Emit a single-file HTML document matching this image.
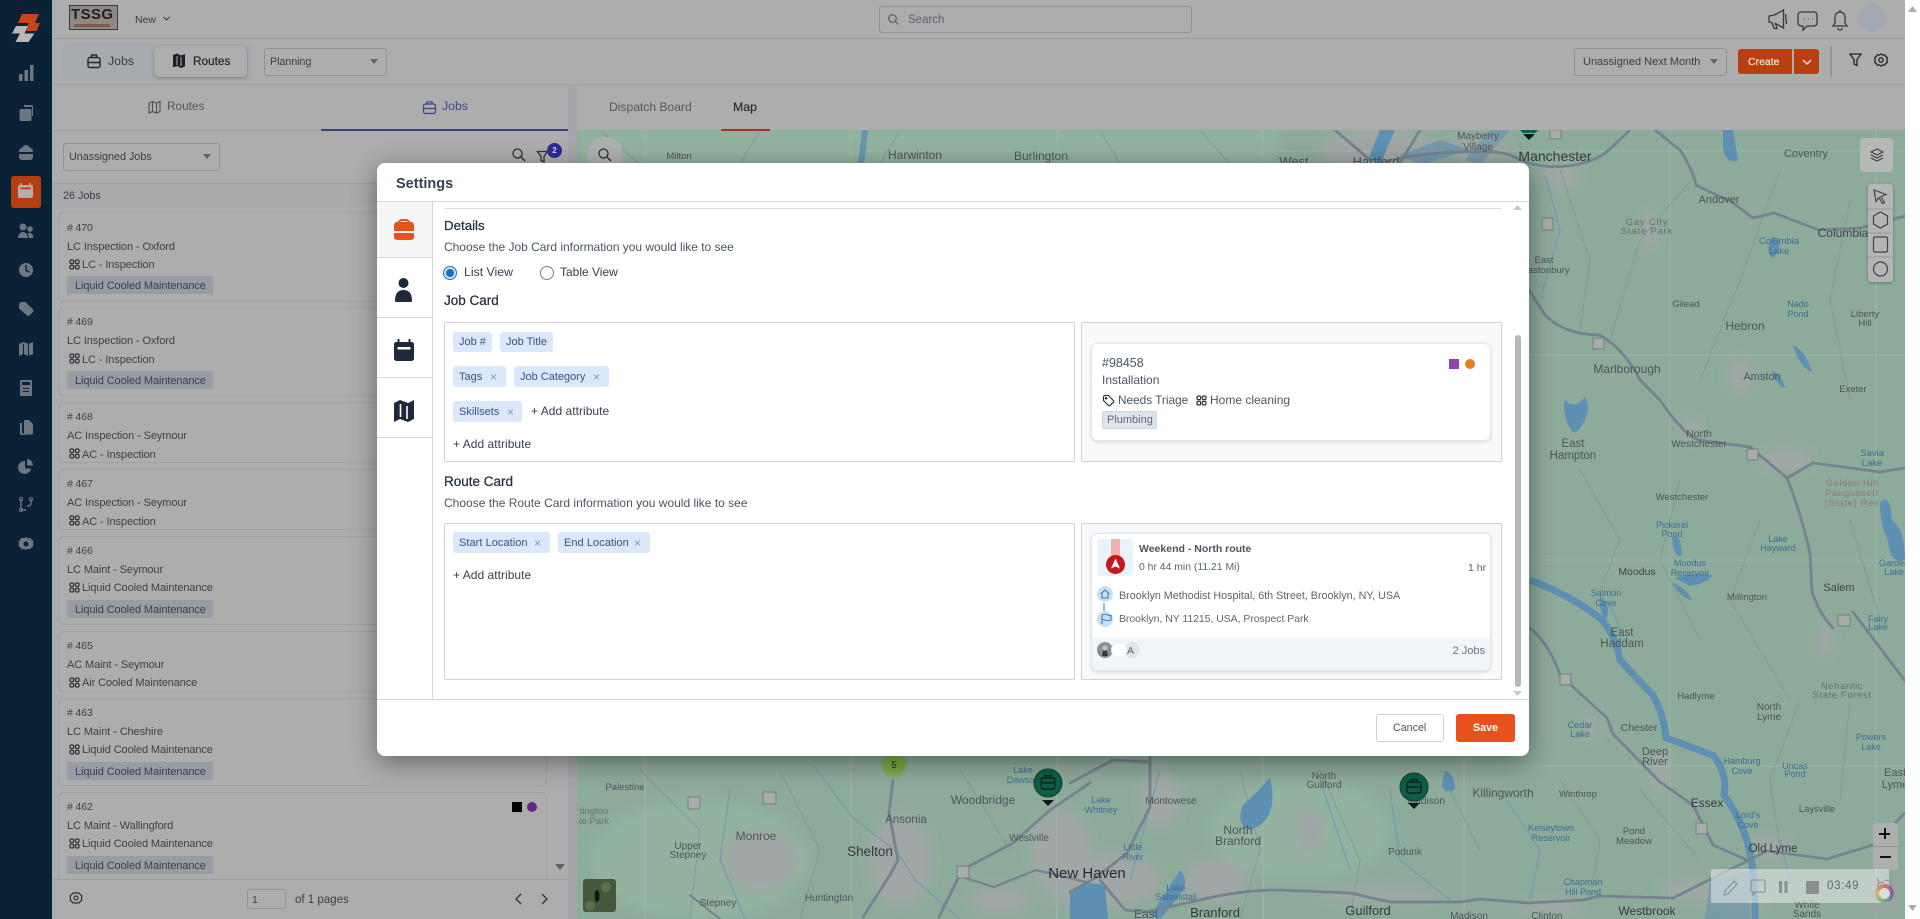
<!DOCTYPE html>
<html lang="en"><head><meta charset="utf-8"><title>Settings</title>
<style>
html,body{margin:0;padding:0;width:1920px;height:919px;overflow:hidden;background:#adadad;font-family:"Liberation Sans",Arial,sans-serif}
div,span,svg{position:absolute;box-sizing:border-box}
.t{white-space:nowrap;line-height:16px;height:16px;font-size:12px;color:#3a3f45}
.card{left:58px;width:489px;background:#adadad;border:1px solid #9fa1a4;border-radius:6px;overflow:hidden}
.c{left:67px;font-size:11px;letter-spacing:-.1px;color:#3d4146;margin-top:1px}
.chipg{left:67px;width:146px;height:18px;background:#979ca5;border-radius:2px}
.chip{background:#dbe8fb;border-radius:3px}
.b{color:#3b4f86;font-size:11px}
.h{font-size:13.5px;color:#27303c;-webkit-text-stroke:.25px #27303c}
.x{color:#8a97b5;font-size:12px}
.box{border:1px solid #cfd3d8;border-radius:2px}
.sel{border:1px solid #8f9296;border-radius:3px}
.tri{width:0;height:0;border-left:4px solid transparent;border-right:4px solid transparent;border-top:5px solid #5f6368}
</style></head><body>
<svg width="0" height="0" style="left:0;top:0"><defs>
<symbol id="g" viewBox="0 0 11 11"><g fill="none" stroke="#33383e" stroke-width="1.300"><rect x="1" y="1" width="3.600" height="3.600" rx="1.200"/><rect x="6.400" y="1" width="3.600" height="3.600" rx="1.200"/><rect x="1" y="6.400" width="3.600" height="3.600" rx="1.200"/><rect x="6.400" y="6.400" width="3.600" height="3.600" rx="1.200"/></g></symbol>
<filter id="bl" x="-30%" y="-30%" width="160%" height="160%"><feGaussianBlur stdDeviation="5"/></filter>
</defs></svg>

<!-- map -->
<svg style="left:577px;top:130px;filter:blur(.35px)" width="1328" height="789" viewBox="577 130 1328 789" font-family="Liberation Sans, sans-serif">
<rect x="577" y="130" width="1328" height="789" fill="#8dab9b"/>
<g filter="url(#bl)">
<g fill="#93b3a0"><rect x="577" y="130" width="700" height="34"/><ellipse cx="700" cy="860" rx="110" ry="60"/><ellipse cx="1300" cy="830" rx="90" ry="50"/></g>
<g fill="#a1a7a6">
<ellipse cx="1380" cy="150" rx="60" ry="20"/><ellipse cx="1480" cy="150" rx="30" ry="12"/><ellipse cx="1560" cy="175" rx="20" ry="12"/>
<ellipse cx="1650" cy="230" rx="8" ry="20"/><ellipse cx="1785" cy="460" rx="26" ry="12"/><ellipse cx="1740" cy="375" rx="12" ry="18"/><ellipse cx="1690" cy="430" rx="9" ry="12"/>
<ellipse cx="1825" cy="640" rx="8" ry="16"/><ellipse cx="1770" cy="848" rx="22" ry="10"/><ellipse cx="1700" cy="890" rx="40" ry="10"/><ellipse cx="1550" cy="908" rx="30" ry="8"/>
<ellipse cx="1660" cy="770" rx="10" ry="22"/><ellipse cx="1590" cy="728" rx="8" ry="10"/>
<ellipse cx="1100" cy="880" rx="60" ry="28"/><ellipse cx="1060" cy="850" rx="30" ry="40"/><ellipse cx="900" cy="860" rx="32" ry="45"/><ellipse cx="760" cy="860" rx="38" ry="30"/><ellipse cx="1215" cy="880" rx="32" ry="22"/><ellipse cx="1160" cy="800" rx="20" ry="28"/><ellipse cx="1000" cy="900" rx="30" ry="14"/>
<ellipse cx="1380" cy="895" rx="60" ry="8"/><ellipse cx="1310" cy="830" rx="14" ry="22"/><ellipse cx="1740" cy="905" rx="24" ry="10"/>
</g></g>
<g stroke="#a8baaf" stroke-width="1" opacity=".7"><path d="M645 130V919M851 130V919M1057 130V919M1263 130V919M1464 130V919M1670 130V919M1876 130V919M577 151H1905M577 355H1905M577 560H1905M577 766H1905"/></g>
<g fill="none" stroke="#7f9b8e" stroke-width=".9">
<path d="M1560 170L1590 260L1580 330M1700 170L1640 240L1610 340M1780 170L1740 280L1700 380M1850 200L1830 300L1850 400M1580 470L1620 540L1600 590M1680 480L1660 560L1700 640M1760 520L1730 600L1790 700M1850 520L1880 620M1560 780L1600 840L1590 900M1640 790L1700 860M1800 700L1770 780L1780 850M1850 700L1840 800M1240 770L1260 850L1240 919M1320 770L1360 860L1350 919M1440 770L1480 850M640 770L700 830L690 919M780 770L820 850L800 919M960 770L1010 850M600 130L640 164M760 130L740 164M900 130L880 164M1100 130L1120 164M1200 130L1230 164"/>
</g>
<g fill="none" stroke="#6f9ab2" stroke-width="1.100">
<path d="M1545 175L1560 230L1540 300M1500 790L1540 850L1530 900M1390 790L1400 860L1450 900M1320 780L1350 870M1160 770L1130 880M815 767L852 817L898 853L915 880L960 919M730 790L720 860L745 919M1608 600L1625 640M1790 880L1780 840"/>
</g>
<path d="M1530 580Q1570 595 1600 618Q1616 635 1620 660Q1640 682 1653 695Q1664 715 1666 738Q1695 748 1714 756Q1728 775 1724 795Q1738 815 1745 835Q1755 860 1755 919" fill="none" stroke="#5d90b2" stroke-width="7" stroke-linejoin="round"/>
<g fill="#5d90b2">
<path d="M1565 400Q1575 410 1585 397Q1592 410 1582 425Q1575 438 1570 428Q1562 415 1565 400Z"/>
<path d="M1793 345Q1805 350 1812 372Q1800 368 1793 345ZM1772 370Q1782 375 1785 388Q1775 385 1772 370Z"/>
<path d="M1672 537Q1680 530 1682 555Q1674 560 1672 537ZM1675 578Q1690 572 1712 575Q1710 582 1690 586ZM1672 582Q1688 590 1692 600Q1680 598 1672 582Z"/>
<path d="M1880 503Q1890 492 1892 520Q1905 530 1905 560Q1890 565 1888 540Q1880 525 1880 503Z"/>
<path d="M1769 245Q1770 235 1778 238Q1782 250 1773 258Q1767 255 1769 245ZM1723 130L1733 130L1738 160Q1726 165 1723 148Z"/>
<path d="M1270 777Q1280 820 1250 830Q1235 825 1243 805Q1260 790 1270 777Z"/><path d="M1070 892Q1090 880 1105 885L1108 919L1070 919Z"/><path d="M1180 870Q1190 880 1180 895L1160 919L1150 915Q1165 895 1180 870Z"/><path d="M1445 770Q1455 775 1455 790Q1445 795 1442 785Z"/>
<path d="M1600 596Q1612 605 1606 620Q1598 610 1600 596Z"/><path d="M1710 880L1750 870L1750 919L1705 919Z" opacity=".5"/>
<path d="M1490 130L1510 130L1480 165L1465 160Z" opacity=".5"/><path d="M1380 130L1395 130L1380 165L1368 160Z"/><path d="M1400 155L1440 140L1470 150L1420 165Z" opacity=".6"/>
<path d="M862 130H868L864 165H858Z" opacity=".8"/>
</g>
<g fill="none" stroke="#75848f" stroke-width="2.800" stroke-linejoin="round" stroke-linecap="round">
<path d="M1380 163Q1430 150 1480 152Q1505 150 1520 160Q1545 170 1575 165Q1600 160 1612 147L1630 130"/>
<path d="M1335 130L1370 160M1420 130L1400 163"/>
<path d="M1655 130L1680 150Q1693 170 1696 185Q1715 195 1729 200L1753 218L1774 213L1819 230L1860 228L1905 216"/>
<path d="M1529 290L1545 315Q1565 335 1600 335Q1625 350 1640 380L1660 400Q1675 422 1680 425Q1690 440 1705 441L1750 447L1787 478L1813 463L1880 472L1905 468"/>
<path d="M1787 478Q1800 510 1810 553L1812 592Q1820 615 1833 628"/>
<path d="M1853 612L1905 681"/>
<path d="M1530 628Q1550 645 1560 675L1607 718L1613 734L1660 782L1693 805L1713 845L1747 860"/>
<path d="M1146 912L1200 900Q1240 890 1280 890L1350 893L1390 902L1460 902L1480 899L1529 903L1583 900L1600 896L1673 898L1733 868L1767 851L1827 859L1873 845L1905 813"/>
<path d="M863 917L890 875L898 860L889 813L893 780"/>
<path d="M939 917L962 870L1013 843L1050 810L1090 783"/>
<path d="M962 877L994 887L1036 870L1090 883" stroke-width="2.200"/>
<path d="M1150 757L1150 807L1127 853L1097 877L1070 892" />
<path d="M1070 783L1113 760L1150 762"/>
<path d="M1100 880L1125 910L1146 912"/>
<path d="M720 919L690 895" stroke-width="2.200"/>
</g>
<g font-size="11" fill="#4d5658" text-anchor="middle">
<text x="679" y="159" font-size="9.500">Milton</text><text x="915" y="159" font-size="12">Harwinton</text><text x="1041" y="160" font-size="12">Burlington</text>
<text x="1294" y="166" font-size="13">West</text><text x="1376" y="166" font-size="13">Hartford</text>
<text x="1478" y="139" font-size="10">Mayberry</text><text x="1478" y="150" font-size="10">Village</text>
<text x="1555" y="161" font-size="14" fill="#333a3d">Manchester</text>
<text x="1806" y="157" font-size="11">Coventry</text><text x="1719" y="203" font-size="11">Andover</text>
<text x="1647" y="225" font-size="9.500" fill="#5f776b" letter-spacing=".8">Gay City</text><text x="1647" y="234" font-size="9.500" fill="#5f776b" letter-spacing=".8">State Park</text>
<text x="1843" y="237" font-size="12" fill="#3e4649">Columbia</text>
<text x="1779" y="244" font-size="9.500" fill="#3e6f92">Columbia</text><text x="1779" y="254" font-size="9.500" fill="#3e6f92">Lake</text>
<text x="1544" y="263" font-size="9.500">East</text><text x="1544" y="273" font-size="9.500">Glastonbury</text>
<text x="1745" y="330" font-size="12">Hebron</text><text x="1865" y="317" font-size="9.500">Liberty</text><text x="1865" y="326" font-size="9.500">Hill</text>
<text x="1798" y="307" font-size="9" fill="#3e6f92">Nado</text><text x="1798" y="317" font-size="9" fill="#3e6f92">Pond</text><text x="1686" y="307" font-size="9.500">Gilead</text>
<text x="1627" y="373" font-size="12">Marlborough</text><text x="1762" y="380" font-size="11">Amston</text><text x="1853" y="392" font-size="9.500">Exeter</text>
<text x="1573" y="447" font-size="11.500">East</text><text x="1573" y="459" font-size="11.500">Hampton</text>
<text x="1699" y="437" font-size="10.500">North</text><text x="1699" y="447" font-size="10">Westchester</text>
<text x="1872" y="456" font-size="9.500" fill="#3e6f92">Savia</text><text x="1872" y="466" font-size="9.500" fill="#3e6f92">Lake</text>
<g fill="#8a7d72" font-size="9.500" letter-spacing=".6"><text x="1852" y="486">Golden Hill</text><text x="1852" y="496">Paugussett</text><text x="1852" y="506">(State) Res</text></g>
<text x="1682" y="500" font-size="9.500">Westchester</text>
<g fill="#3e6f92" font-size="9"><text x="1672" y="528">Pickerel</text><text x="1672" y="537">Pond</text><text x="1778" y="542">Lake</text><text x="1778" y="551">Hayward</text><text x="1690" y="566">Moodus</text><text x="1690" y="576">Reservoir</text><text x="1606" y="596">Salmon</text><text x="1606" y="606">Cove</text><text x="1878" y="622">Fairy</text><text x="1878" y="630">Lake</text><text x="1580" y="728">Cedar</text><text x="1580" y="737">Lake</text><text x="1871" y="740">Powers</text><text x="1871" y="750">Lake</text><text x="1742" y="764">Hamburg</text><text x="1742" y="774">Cove</text><text x="1795" y="769">Uncas</text><text x="1795" y="777">Pond</text><text x="1748" y="818">Lord's</text><text x="1748" y="828">Cove</text><text x="1551" y="831">Kelseytown</text><text x="1551" y="841">Reservoir</text><text x="1583" y="885">Chapman</text><text x="1583" y="895">Hill Pond</text><text x="1023" y="773">Lake</text><text x="1023" y="783">Dawson</text><text x="1101" y="803">Lake</text><text x="1101" y="813">Whitney</text><text x="1133" y="850">Little</text><text x="1133" y="860">River</text><text x="1176" y="891">Lake</text><text x="1176" y="900">Saltonstall</text><text x="1894" y="566">Garden</text><text x="1894" y="575">Lake</text></g>
<text x="1637" y="575" font-size="10.500" fill="#3e4649">Moodus</text><text x="1747" y="600" font-size="9.500">Millington</text><text x="1839" y="591" font-size="11" fill="#3e4649">Salem</text>
<text x="1622" y="636" font-size="11.500">East</text><text x="1622" y="647" font-size="11.500">Haddam</text>
<g fill="#5f776b" font-size="9.500" letter-spacing=".6"><text x="1842" y="689">Nehantic</text><text x="1842" y="698">State Forest</text></g>
<text x="1696" y="699" font-size="9.500">Hadlyme</text><text x="1769" y="710" font-size="10">North</text><text x="1769" y="720" font-size="10">Lyme</text>
<text x="1639" y="731" font-size="10.500">Chester</text><text x="1655" y="755" font-size="11">Deep</text><text x="1655" y="765" font-size="11">River</text>
<text x="1895" y="776" font-size="11">East</text><text x="1895" y="788" font-size="11">Lyme</text>
<text x="1578" y="797" font-size="9.500">Winthrop</text><text x="1503" y="797" font-size="12">Killingworth</text><text x="1707" y="807" font-size="12" fill="#333a3d">Essex</text><text x="1817" y="812" font-size="9.500">Laysville</text>
<text x="1634" y="834" font-size="9.500">Pond</text><text x="1634" y="844" font-size="9.500">Meadow</text><text x="1773" y="852" font-size="11.500" fill="#333a3d">Old Lyme</text>
<text x="1647" y="915" font-size="12" fill="#333a3d">Westbrook</text><text x="1807" y="908" font-size="10">White</text><text x="1807" y="917" font-size="10">Sands</text><text x="1547" y="919" font-size="10">Clinton</text>
<text x="1324" y="779" font-size="10">North</text><text x="1324" y="788" font-size="10">Guilford</text><text x="1405" y="855" font-size="10">Podunk</text><text x="1426" y="804" font-size="10">Madison</text>
<text x="1238" y="834" font-size="12">North</text><text x="1238" y="845" font-size="12">Branford</text><text x="1171" y="804" font-size="10">Montowese</text>
<text x="1087" y="878" font-size="15" fill="#262c30">New Haven</text><text x="1215" y="917" font-size="13" fill="#333a3d">Branford</text><text x="1146" y="918" font-size="12">East</text><text x="1368" y="915" font-size="13" fill="#333a3d">Guilford</text><text x="1469" y="919" font-size="10">Madison</text>
<text x="625" y="790" font-size="9.500">Palestine</text><text x="594" y="814" font-size="9.500" fill="#5f776b">tington</text><text x="594" y="824" font-size="9.500" fill="#5f776b">te Park</text>
<text x="688" y="849" font-size="10">Upper</text><text x="688" y="858" font-size="10">Stepney</text><text x="756" y="840" font-size="12">Monroe</text><text x="718" y="906" font-size="10">Stepney</text><text x="829" y="901" font-size="10">Huntington</text>
<text x="870" y="856" font-size="13.500" fill="#333a3d">Shelton</text><text x="906" y="823" font-size="11.500">Ansonia</text><text x="983" y="804" font-size="12">Woodbridge</text><text x="1029" y="841" font-size="10">Westville</text>
</g>
<g fill="#a6adab" stroke="#6f7573" stroke-width=".8"><rect x="1593" y="338" width="11" height="11"/><rect x="1747" y="449" width="11" height="11"/><rect x="1838" y="615" width="12" height="11"/><rect x="1560" y="674" width="11" height="11"/><rect x="1696" y="823" width="11" height="11"/><rect x="1542" y="218" width="11" height="12"/><rect x="1550" y="130" width="11" height="9"/><rect x="763" y="792" width="13" height="12"/><rect x="688" y="797" width="12" height="12"/><rect x="957" y="866" width="12" height="12"/></g>
<!-- markers -->
<circle cx="894" cy="764" r="14" fill="#83a85c" opacity=".55"/><circle cx="894" cy="764" r="11" fill="#7cab45"/><text x="894" y="768" font-size="9.500" text-anchor="middle" fill="#1b2a12">5</text>
<g><circle cx="1048" cy="783" r="14" fill="#0c5f49" stroke="#1a3a32" stroke-width="1"/><path d="M1042 800h12l-6 6z" fill="#0e1a16"/><rect x="1041" y="778" width="14" height="11" rx="2" fill="none" stroke="#10231d" stroke-width="1.400"/><path d="M1045 778v-2.500h6v2.500M1041 783h14" stroke="#10231d" fill="none" stroke-width="1.400"/></g>
<g><circle cx="1414" cy="787" r="14" fill="#0c5f49" stroke="#1a3a32" stroke-width="1"/><path d="M1408 803h12l-6 6z" fill="#0e1a16"/><rect x="1407" y="782" width="14" height="11" rx="2" fill="none" stroke="#10231d" stroke-width="1.400"/><path d="M1411 782v-2.500h6v2.500M1407 787h14" stroke="#10231d" fill="none" stroke-width="1.400"/></g>
<path d="M1520 130h18l-3 3h-12z" fill="#0c5f49"/><path d="M1523 134h12l-6 6z" fill="#0e1a16"/>
<rect x="583" y="879" width="33" height="33" rx="3" fill="#46583c"/><ellipse cx="597" cy="896" rx="2.500" ry="6" fill="#12160f"/><circle cx="606" cy="887" r="5" fill="#5d7048"/><circle cx="590" cy="906" r="5" fill="#5d7048"/>
</svg>

<!-- right strip -->
<div style="left:1905px;top:0;width:15px;height:919px;background:#fff"></div>
<svg style="left:1905px;top:0" width="15" height="919"><path d="M3 12l4.500-6 4.500 6z" fill="#adadad"/><path d="M3 905l4.500 6 4.500-6z" fill="#adadad"/></svg>

<!-- sidebar -->
<div style="left:0;top:0;width:52px;height:919px;background:#0a2235"></div>
<svg style="left:0;top:0" width="52" height="570">
<g fill="#c8441a"><path d="M22 14h17l-4 9H18zM28.500 23H40l-3.500 8h-10z"/></g><g fill="#b9b9b9"><path d="M16 26h12l-3.500 7.500H12zM20 33.500h14.500L28.500 42h-13z"/></g>
<rect x="11" y="176" width="30" height="32" rx="3" fill="#b53f13"/>
<g fill="#6d7780">
<path d="M19 74h3.500v7H19zM24.500 70h3.500v11h-3.500zM30 65h3.500v16H30z"/>
<path d="M21 109h9a1.500 1.500 0 0 1 1.500 1.500v9a1.500 1.500 0 0 1-1.500 1.500h-9a1.500 1.500 0 0 1-1.500-1.500v-9a1.500 1.500 0 0 1 1.500-1.500zM24 105h7a2 2 0 0 1 2 2v9h-1v-9h-8z"/>
<path d="M23 147a3 2 0 0 1 6 0 7 5 0 0 1 4 5H19a7 5 0 0 1 4-5zM19 154h14v3a3 3 0 0 1-3 3h-8a3 3 0 0 1-3-3z"/>
<circle cx="23" cy="227" r="3.500"/><circle cx="30" cy="229" r="2.800"/><path d="M18 238a5 6 0 0 1 10 0zM28 233a4 4 0 0 1 5 5h-4z"/>
<circle cx="26" cy="270" r="7"/>
<path d="M19 304l1.500-2h5l7.500 7.500a2 2 0 0 1 0 2.500l-3.500 3.500a2 2 0 0 1-2.500 0L19 308.500z"/>
<path d="M19 344l4.500-2 5 2 4.500-2v12l-4.500 2-5-2-4.500 2z"/>
<rect x="20" y="380" width="12" height="16" rx="1"/>
<path d="M24 420h5l4 4v9a1.500 1.500 0 0 1-1.500 1.500h-6a1.500 1.500 0 0 1-1.500-1.500z"/><path d="M20 423h2v10l4 2h-4.500a1.500 1.500 0 0 1-1.500-1.500z"/>
<path d="M25 461a6.500 6.500 0 1 0 6 7.500h-6z"/><path d="M27 459a6.500 6.500 0 0 1 6 6.500h-6z"/>
<path d="M26 537l2 1.200 2.500-.4 1.200 2 1.800 1.200-.4 2.500.4 2.500-1.800 1.200-1.200 2-2.500-.4-2 1.200-2-1.200-2.500.4-1.200-2-1.800-1.200.4-2.500-.4-2.500 1.800-1.200 1.200-2 2.500.4z"/>
</g>
<path d="M21 499v11M21 510h5M31 499v4q0 3-4 3" fill="none" stroke="#6d7780" stroke-width="1.400"/><circle cx="21" cy="499" r="1.600" fill="none" stroke="#6d7780"/><circle cx="21" cy="510" r="1.600" fill="none" stroke="#6d7780"/><circle cx="31" cy="499" r="1.600" fill="none" stroke="#6d7780"/>
<rect x="18" y="185" width="15" height="13" rx="2" fill="#b9aca6"/><path d="M21 183v3M30 183v3" stroke="#b9aca6" stroke-width="1.500"/><rect x="20.500" y="187.500" width="10" height="1.800" fill="#b53f13"/>
<path d="M26 265v5.500l3.500 1.500" stroke="#0a2235" stroke-width="1.400" fill="none"/><circle cx="26" cy="544" r="2.500" fill="#0a2235"/><path d="M23.500 344v12M28.500 344v12" stroke="#0a2235"/><rect x="22" y="382" width="8" height="3" fill="#0a2235"/><path d="M19 153h14" stroke="#0a2235"/><rect x="23" y="391" width="6" height="1" fill="#0a2235"/><rect x="23" y="388" width="6" height="1" fill="#0a2235"/>
</svg>

<!-- top bar -->
<div style="left:52px;top:38px;width:1853px;height:1px;background:#9c9ea1"></div>
<div style="left:69px;top:5px;width:49px;height:25px;background:#8f8885;border:1px solid #3a3a3a"></div>
<div class="t" style="left:71px;top:7px;font-size:15px;font-weight:bold;color:#1e2124;letter-spacing:.4px">TSSG</div>
<div style="left:74px;top:24px;width:36px;height:3px;background:#7d5a52"></div>
<div class="t" style="left:135px;top:12px;font-size:10.500px">New</div>
<svg style="left:162px;top:15px" width="10" height="8"><path d="M1.500 2l3 3 3-3" fill="none" stroke="#3a3f45" stroke-width="1.100"/></svg>
<div style="left:879px;top:6px;width:313px;height:27px;background:#aaacae;border:1px solid #8f9296;border-radius:3px"></div>
<svg style="left:887px;top:13px" width="13" height="13"><circle cx="5.500" cy="5.500" r="3.800" fill="none" stroke="#5d6268" stroke-width="1.200"/><path d="M8.500 8.500l3 3" stroke="#5d6268" stroke-width="1.200"/></svg>
<div class="t" style="left:908px;top:12px;font-size:11.500px;color:#60646a">Search</div>
<svg style="left:1765px;top:5px" width="125" height="28" fill="none" stroke="#353a40" stroke-width="1.300">
<path d="M4 11v6l3 .5 2 6h3l-1.500-5 8 4.500V5l-9 5z"/><path d="M20.500 9l1 10"/>
<path d="M36 7h13a3 3 0 0 1 3 3v8a3 3 0 0 1-3 3h-7l-4 4v-4h-2a3 3 0 0 1-3-3v-8a3 3 0 0 1 3-3z"/><path d="M39 14h.5M43 14h.5M47 14h.5" stroke-width="1.800"/>
<path d="M75 7a5 5 0 0 1 5 5v6l2 3H68l2-3v-6a5 5 0 0 1 5-5zM73 23a2 2 0 0 0 4 0M75 5v2"/>
</svg>
<div style="left:1858px;top:4px;width:28px;height:28px;border-radius:50%;background:#a3a8b3"></div>

<!-- toolbar -->
<div style="left:52px;top:84px;width:1853px;height:1px;background:#9c9ea1"></div>
<div style="left:63px;top:43px;width:189px;height:37px;background:#a7aaae;border-radius:5px"></div>
<div style="left:154px;top:46px;width:93px;height:31px;background:#aeaeae;border-radius:5px;box-shadow:0 1px 3px rgba(0,0,0,.25)"></div>
<svg style="left:86px;top:53px" width="16" height="16" fill="none" stroke="#22272c" stroke-width="1.400"><rect x="2" y="4.500" width="12" height="10" rx="2"/><path d="M5.500 4.500v-2.500h5v2.500M2 9.500h12"/></svg>
<div class="t" style="left:108px;top:53px;font-size:12.300px;color:#3a3f45">Jobs</div>
<svg style="left:171px;top:52px" width="16" height="17"><path d="M2 3l4-1.500 4 2 4-1.500v12.500l-4 1.500-4-2-4 1.500z" fill="#1c2127"/><path d="M6 4v9M10 5v9" stroke="#aeaeae" stroke-width="1"/></svg>
<div class="t" style="left:193px;top:53px;font-size:11.800px;color:#24292e;-webkit-text-stroke:.2px #24292e">Routes</div>
<div class="sel" style="left:264px;top:48px;width:123px;height:28px"></div>
<div class="t" style="left:270px;top:54px;font-size:10.800px;letter-spacing:-.1px">Planning</div>
<div class="tri" style="left:370px;top:59px"></div>
<div class="sel" style="left:1574px;top:48px;width:153px;height:28px"></div>
<div class="t" style="left:1583px;top:54px;font-size:11px">Unassigned Next Month</div>
<div class="tri" style="left:1710px;top:59px"></div>
<div style="left:1738px;top:49px;width:54px;height:25px;background:#b83f10;border-radius:3px 0 0 3px"></div>
<div style="left:1794px;top:49px;width:25px;height:25px;background:#b83f10;border-radius:0 3px 3px 0"></div>
<div class="t" style="left:1748px;top:54px;font-size:10.500px;color:#efe3dd;-webkit-text-stroke:.2px #efe3dd">Create</div>
<svg style="left:1801px;top:58px" width="12" height="9"><path d="M2 2l4 4 4-4" fill="none" stroke="#efe3dd" stroke-width="1.400"/></svg>
<div style="left:1830px;top:46px;width:2px;height:31px;background:#92959a"></div>
<svg style="left:1848px;top:51px" width="44" height="18" fill="none" stroke="#22272c" stroke-width="1.300"><path d="M2 3h11l-4 5.500v6l-3-1.500V8.500z"/><circle cx="33" cy="9" r="2.200"/><path d="M33 3l1.700 1.100 2-.3 1 1.700 1.600 1.100-.4 2.400.4 2.400-1.600 1.100-1 1.700-2-.3-1.700 1.100-1.700-1.100-2 .3-1-1.700-1.600-1.100.4-2.400-.4-2.400 1.600-1.100 1-1.700 2 .3z"/></svg>

<!-- left panel tabs -->
<div style="left:52px;top:130px;width:516px;height:1px;background:#9c9ea1"></div>
<div style="left:321px;top:129px;width:247px;height:2px;background:#393f80"></div>
<div style="left:568px;top:84px;width:9px;height:835px;background:#a4a6a9"></div>
<svg style="left:147px;top:100px" width="15" height="14" fill="none" stroke="#4b5056" stroke-width="1.100"><path d="M2 3l3.500-1.500 4 1.500 3.500-1.500v10L9.500 13l-4-1.500L2 13zM5.500 2v9.500M9.500 3v10"/></svg>
<div class="t" style="left:167px;top:98px;font-size:11.800px;color:#55595f">Routes</div>
<svg style="left:422px;top:100px" width="15" height="15" fill="none" stroke="#3e4488" stroke-width="1.200"><rect x="1.500" y="4" width="12" height="9.500" rx="2"/><path d="M5 4V1.800h5V4M1.500 8.500h12"/></svg>
<div class="t" style="left:442px;top:98px;font-size:12.300px;color:#3e4488">Jobs</div>
<div class="t" style="left:609px;top:99px;font-size:12.100px;color:#55595f">Dispatch Board</div>
<div class="t" style="left:733px;top:99px;font-size:12.300px;color:#2c3036;-webkit-text-stroke:.2px #2c3036">Map</div>
<div style="left:721px;top:129px;width:49px;height:2px;background:#a0391a"></div>

<div class="sel" style="left:63px;top:143px;width:157px;height:28px"></div>
<div class="t" style="left:69px;top:149px;font-size:10.800px">Unassigned Jobs</div>
<div class="tri" style="left:203px;top:154px"></div>
<svg style="left:511px;top:147px" width="16" height="16" fill="none" stroke="#2a2f34" stroke-width="1.300"><circle cx="6.500" cy="6.500" r="4.500"/><path d="M10 10l4 4"/></svg>
<svg style="left:536px;top:150px" width="13" height="13" fill="none" stroke="#2a2f34" stroke-width="1.300"><path d="M1.500 1.500h10l-3.500 5v5.500l-3-1.500v-4z"/></svg>
<div style="left:547px;top:143px;width:15px;height:15px;border-radius:50%;background:#2c2c96;color:#d9d9e8;font-size:8px;line-height:15px;text-align:center;font-weight:bold">2</div>
<div style="left:587px;top:137px;width:36px;height:36px;border-radius:50%;background:#adb1b0"></div>
<svg style="left:597px;top:147px" width="16" height="16" fill="none" stroke="#2a2f34" stroke-width="1.300"><circle cx="6.500" cy="6.500" r="4.500"/><path d="M10 10l4 4"/></svg>

<div style="left:52px;top:183px;width:516px;height:1px;background:#9c9ea1"></div>
<div style="left:52px;top:184px;width:516px;height:22px;background:#a8aaac"></div>
<div class="t" style="left:63px;top:188px;font-size:10.800px">26 Jobs</div>

<!-- list -->
<div class="card" style="top:212px;height:90px"></div>
<div class="t c" style="top:219px;font-size:10.500px">#&nbsp;470</div><div class="t c" style="top:238px">LC Inspection - Oxford</div>
<svg style="left:69px;top:259px" width="11" height="11"><use href="#g"/></svg><div class="t c" style="left:82px;top:256px">LC - Inspection</div>
<div class="chipg" style="top:276px"></div><div class="t c" style="left:75px;top:277px">Liquid Cooled Maintenance</div>

<div class="card" style="top:307px;height:89px"></div>
<div class="t c" style="top:313px;font-size:10.500px">#&nbsp;469</div><div class="t c" style="top:332px">LC Inspection - Oxford</div>
<svg style="left:69px;top:353px" width="11" height="11"><use href="#g"/></svg><div class="t c" style="left:82px;top:351px">LC - Inspection</div>
<div class="chipg" style="top:371px"></div><div class="t c" style="left:75px;top:372px">Liquid Cooled Maintenance</div>

<div class="card" style="top:402px;height:61px"></div>
<div class="t c" style="top:408px;font-size:10.500px">#&nbsp;468</div><div class="t c" style="top:427px">AC Inspection - Seymour</div>
<svg style="left:69px;top:448px" width="11" height="11"><use href="#g"/></svg><div class="t c" style="left:82px;top:446px">AC - Inspection</div>

<div class="card" style="top:469px;height:61px"></div>
<div class="t c" style="top:475px;font-size:10.500px">#&nbsp;467</div><div class="t c" style="top:494px">AC Inspection - Seymour</div>
<svg style="left:69px;top:515px" width="11" height="11"><use href="#g"/></svg><div class="t c" style="left:82px;top:513px">AC - Inspection</div>

<div class="card" style="top:536px;height:89px"></div>
<div class="t c" style="top:542px;font-size:10.500px">#&nbsp;466</div><div class="t c" style="top:561px">LC Maint - Seymour</div>
<svg style="left:69px;top:582px" width="11" height="11"><use href="#g"/></svg><div class="t c" style="left:82px;top:579px">Liquid Cooled Maintenance</div>
<div class="chipg" style="top:600px"></div><div class="t c" style="left:75px;top:601px">Liquid Cooled Maintenance</div>

<div class="card" style="top:631px;height:61px"></div>
<div class="t c" style="top:637px;font-size:10.500px">#&nbsp;465</div><div class="t c" style="top:656px">AC Maint - Seymour</div>
<svg style="left:69px;top:677px" width="11" height="11"><use href="#g"/></svg><div class="t c" style="left:82px;top:674px">Air Cooled Maintenance</div>

<div class="card" style="top:698px;height:88px"></div>
<div class="t c" style="top:704px;font-size:10.500px">#&nbsp;463</div><div class="t c" style="top:723px">LC Maint - Cheshire</div>
<svg style="left:69px;top:744px" width="11" height="11"><use href="#g"/></svg><div class="t c" style="left:82px;top:741px">Liquid Cooled Maintenance</div>
<div class="chipg" style="top:762px"></div><div class="t c" style="left:75px;top:763px">Liquid Cooled Maintenance</div>

<div class="card" style="top:792px;height:90px;border-bottom:0"></div>
<div class="t c" style="top:798px;font-size:10.500px">#&nbsp;462</div><div class="t c" style="top:817px">LC Maint - Wallingford</div>
<svg style="left:69px;top:838px" width="11" height="11"><use href="#g"/></svg><div class="t c" style="left:82px;top:835px">Liquid Cooled Maintenance</div>
<div class="chipg" style="top:856px"></div><div class="t c" style="left:75px;top:857px">Liquid Cooled Maintenance</div>
<div style="left:512px;top:802px;width:10px;height:10px;background:#000"></div>
<div style="left:527px;top:802px;width:10px;height:10px;border-radius:50%;background:#5e2a86"></div>
<svg style="left:555px;top:864px" width="10" height="7"><path d="M0 0h10L5 6z" fill="#5f6368"/></svg>

<!-- pager -->
<div style="left:52px;top:879px;width:516px;height:40px;background:#adadad;border-top:1px solid #9c9ea1"></div>
<svg style="left:69px;top:891px" width="14" height="14" fill="none" stroke="#2f343a" stroke-width="1.200"><circle cx="7" cy="7" r="2"/><path d="M7 1.500l1.600.9 1.800-.3.9 1.600 1.500.9-.3 2.400.3 2.400-1.500.9-.9 1.600-1.800-.3-1.600.9-1.600-.9-1.800.3-.9-1.600-1.500-.9.300-2.400-.3-2.400 1.500-.9.900-1.600 1.800.3z"/></svg>
<div class="sel" style="left:247px;top:889px;width:39px;height:20px"></div>
<div class="t" style="left:252px;top:892px;font-size:10.500px">1</div>
<div class="t" style="left:295px;top:892px;font-size:11.500px">of 1 pages</div>
<svg style="left:512px;top:892px" width="40" height="14" fill="none" stroke="#2f343a" stroke-width="1.300"><path d="M9 2L4 7l5 5M30 2l5 5-5 5"/></svg>

<!-- map controls -->
<div style="left:1860px;top:138px;width:33px;height:34px;background:#b6b8b7;border-radius:4px"></div>
<svg style="left:1869px;top:147px" width="16" height="16" fill="none" stroke="#3a3f45" stroke-width="1.100"><path d="M8 2l6 3-6 3-6-3zM2 8l6 3 6-3M2 11l6 3 6-3"/></svg>
<div style="left:1868px;top:184px;width:25px;height:98px;background:#b4b5b5;border-radius:3px;box-shadow:0 1px 3px rgba(0,0,0,.3)"></div>
<svg style="left:1868px;top:184px" width="25" height="98" fill="none" stroke="#3f444a" stroke-width="1.200"><path d="M0 25h25M0 49h25M0 73h25" stroke="#9ea0a1"/><path d="M6 6l12 4.500-5 2 3.500 6-2 1-3.500-6-3 4z"/><path d="M12.500 28l7 4v8l-7 4-7-4v-8z"/><rect x="5.500" y="53" width="14" height="15" rx="1.500"/><circle cx="12.500" cy="85" r="7"/></svg>
<div style="left:1873px;top:823px;width:25px;height:47px;background:#adb0af;border-radius:3px"></div>
<div style="left:1873px;top:846px;width:25px;height:1px;background:#8f9190"></div>
<div style="left:1879px;top:833px;width:11px;height:2px;background:#111"></div><div style="left:1884px;top:828px;width:2px;height:11px;background:#111"></div>
<div style="left:1880px;top:856px;width:11px;height:2px;background:#111"></div>
<div style="left:1866px;top:880px;width:32px;height:32px;background:#97a4a0;border-radius:3px"></div>
<div style="left:1711px;top:869px;width:178px;height:34px;background:rgba(233,236,235,.55);border-radius:2px"></div>
<svg style="left:1711px;top:869px" width="190" height="40" fill="none" stroke="#8a8f93" stroke-width="1.100">
<path d="M14 22l9-10 3 3-9 10-4 1z"/><rect x="40" y="11" width="14" height="12" rx="1"/><path d="M42 23v3l3-3" />
<rect x="68" y="12" width="3" height="12" fill="#8a8f93" stroke="none"/><rect x="73.500" y="12" width="3" height="12" fill="#8a8f93" stroke="none"/><rect x="95" y="12" width="13" height="13" rx="1" fill="#8a8f93" stroke="none"/>
<path d="M174 11a7 7 0 1 1-6 3M166 9l2 5 5-1"/></svg>
<div class="t" style="left:1827px;top:878px;font-size:11.500px;letter-spacing:.7px;color:#62676b">03:49</div>
<div style="left:1875px;top:884px;width:19px;height:19px;border-radius:50%;background:conic-gradient(#d9574e,#7455b8,#54a86c,#d9b84e,#d9574e);opacity:.8"></div>
<div style="left:1879px;top:888px;width:11px;height:11px;border-radius:50%;background:#d9dcdb"></div>

<!-- modal -->
<div style="left:377px;top:163px;width:1152px;height:593px;background:#fff;border-radius:8px;box-shadow:0 6px 26px rgba(0,0,0,.42)"></div>
<div class="t" style="left:396px;top:176px;font-size:14.500px;font-weight:bold;color:#374151">Settings</div>
<div style="left:377px;top:201px;width:1152px;height:1px;background:#d3d6da"></div>
<div style="left:377px;top:202px;width:55px;height:55px;background:#f5f5f5"></div>
<div style="left:432px;top:201px;width:1px;height:498px;background:#d3d6da"></div>
<div style="left:377px;top:257px;width:55px;height:1px;background:#d3d6da"></div>
<div style="left:377px;top:317px;width:55px;height:1px;background:#d3d6da"></div>
<div style="left:377px;top:377px;width:55px;height:1px;background:#d3d6da"></div>
<div style="left:377px;top:437px;width:55px;height:1px;background:#d3d6da"></div>
<svg style="left:392px;top:217px" width="24" height="205">
<path d="M7 6a3 3 0 0 1 3-3h4a3 3 0 0 1 3 3" fill="none" stroke="#e8501e" stroke-width="2"/>
<path d="M5 5h14a3 3 0 0 1 3 3v6H2V8a3 3 0 0 1 3-3zM2 16h20v4a3 3 0 0 1-3 3H5a3 3 0 0 1-3-3z" fill="#e8501e"/>
<circle cx="11.500" cy="66" r="5" fill="#1e293b"/><path d="M3 84q0-11 8.500-11T20 84q0 1-2 1H5q-2 0-2-1z" fill="#1e293b"/>
<path d="M4 125h16a2.500 2.500 0 0 1 2 2.500v14a2.500 2.500 0 0 1-2.500 2.500h-15A2.500 2.500 0 0 1 2 141.500v-14a2.500 2.500 0 0 1 2-2.500z" fill="#1e293b"/><path d="M6.500 122v5M17.500 122v5" stroke="#1e293b" stroke-width="2"/><rect x="5.500" y="130" width="13" height="2.500" fill="#fff"/>
<path d="M2 186l6-3 8 3 6-3v19l-6 3-8-3-6 3z" fill="#1e293b"/><path d="M8.500 187v13M15 189v13" stroke="#fff" stroke-width="1.600"/>
</svg>

<div style="left:444px;top:208px;width:1058px;height:1px;background:#d8dbdf"></div>
<svg style="left:1512px;top:204px" width="11" height="7"><path d="M1 6l4.500-5L10 6z" fill="#c4c7cb"/></svg>
<div style="left:1515px;top:335px;width:6px;height:352px;background:#b5b7ba;border-radius:3px"></div>
<svg style="left:1512px;top:690px" width="11" height="7"><path d="M1 1l4.500 5L10 1z" fill="#c4c7cb"/></svg>

<div class="t h" style="left:444px;top:218px;font-size:13.300px">Details</div>
<div class="t" style="left:444px;top:239px;font-size:12px;color:#4b5563;letter-spacing:-.02px">Choose the Job Card information you would like to see</div>
<div style="left:443px;top:266px;width:14px;height:14px;border-radius:50%;background:#cfe3f5;border:1px solid #1976d2"></div>
<div style="left:446px;top:269px;width:8px;height:8px;border-radius:50%;background:#1670c8"></div>
<div class="t" style="left:464px;top:264px;font-size:12.300px;color:#374151">List View</div>
<div style="left:540px;top:266px;width:14px;height:14px;border-radius:50%;background:#fff;border:1px solid #7a7f85"></div>
<div class="t" style="left:560px;top:264px;font-size:12px;color:#374151">Table View</div>
<div class="t h" style="left:444px;top:293px">Job Card</div>

<div class="box" style="left:444px;top:322px;width:631px;height:140px"></div>
<div class="chip" style="left:453px;top:332px;width:39px;height:20px"></div><div class="t b" style="left:459px;top:334px">Job #</div>
<div class="chip" style="left:500px;top:332px;width:53px;height:20px"></div><div class="t b" style="left:506px;top:334px">Job Title</div>
<div class="chip" style="left:453px;top:366px;width:53px;height:21px"></div><div class="t b" style="left:459px;top:369px">Tags</div><div class="t x" style="left:490px;top:369px">×</div>
<div class="chip" style="left:514px;top:366px;width:95px;height:21px"></div><div class="t b" style="left:520px;top:369px">Job Category</div><div class="t x" style="left:593px;top:369px">×</div>
<div class="chip" style="left:453px;top:401px;width:69px;height:21px"></div><div class="t b" style="left:459px;top:404px">Skillsets</div><div class="t x" style="left:507px;top:404px">×</div>
<div class="t" style="left:531px;top:403px;color:#374151;letter-spacing:.03px">+ Add attribute</div>
<div class="t" style="left:453px;top:436px;color:#374151;letter-spacing:.03px">+ Add attribute</div>

<div class="box" style="left:1081px;top:322px;width:421px;height:140px;background:#f7f9fb"></div>
<div style="left:1091px;top:343px;width:400px;height:98px;background:#fff;border:1px solid #e5e8ec;border-radius:6px;box-shadow:0 1px 3px rgba(0,0,0,.15)"></div>
<div class="t" style="left:1102px;top:355px;font-size:12.500px;color:#4b5563">#98458</div>
<div class="t" style="left:1102px;top:372px;color:#4b5563">Installation</div>
<svg style="left:1102px;top:394px" width="13" height="13" fill="none" stroke="#1f2937" stroke-width="1.100"><path d="M1.500 2.500l1-1h4l5 5.200a1 1 0 0 1 0 1.400l-3.500 3.500a1 1 0 0 1-1.400 0L1.500 6.500z"/><circle cx="4.200" cy="4.200" r=".7"/></svg>
<div class="t" style="left:1118px;top:392px;font-size:11.800px;color:#4b5563">Needs Triage</div>
<svg style="left:1196px;top:395px" width="11" height="11"><use href="#g"/></svg>
<div class="t" style="left:1210px;top:392px;font-size:12px;color:#4b5563">Home cleaning</div>
<div style="left:1102px;top:411px;width:55px;height:18px;background:#dde4ec;border:1px solid #cfd8e2;border-radius:2px"></div>
<div class="t" style="left:1107px;top:412px;font-size:11px;color:#5f6b7a">Plumbing</div>
<div style="left:1449px;top:359px;width:10px;height:10px;background:#8e44ad"></div>
<div style="left:1465px;top:359px;width:10px;height:10px;border-radius:50%;background:#e67e22"></div>

<div class="t h" style="left:444px;top:474px;font-size:13.500px">Route Card</div>
<div class="t" style="left:444px;top:495px;color:#4b5563">Choose the Route Card information you would like to see</div>
<div class="box" style="left:444px;top:523px;width:631px;height:157px"></div>
<div class="chip" style="left:453px;top:532px;width:97px;height:21px"></div><div class="t b" style="left:459px;top:535px;letter-spacing:.05px">Start Location</div><div class="t x" style="left:534px;top:535px">×</div>
<div class="chip" style="left:558px;top:532px;width:92px;height:21px"></div><div class="t b" style="left:564px;top:535px;letter-spacing:.05px">End Location</div><div class="t x" style="left:634px;top:535px">×</div>
<div class="t" style="left:453px;top:567px;color:#374151;letter-spacing:.03px">+ Add attribute</div>

<div class="box" style="left:1081px;top:523px;width:421px;height:157px;background:#f7f9fb"></div>
<div style="left:1091px;top:533px;width:400px;height:138px;background:#fff;border:1px solid #e5e8ec;border-radius:6px;box-shadow:0 1px 3px rgba(0,0,0,.15)"></div>
<div style="left:1097px;top:539px;width:36px;height:37px;background:#eaf3fb;border-radius:3px"></div>
<div style="left:1111px;top:539px;width:9px;height:24px;background:#efb2b2"></div>
<svg style="left:1105px;top:554px" width="21" height="21"><circle cx="10.500" cy="10.500" r="9.500" fill="#c8161d"/><path d="M10.500 4.500l4.500 10-4.500-2-4.500 2z" fill="#fff"/></svg>
<div class="t" style="left:1139px;top:541px;font-size:10.500px;font-weight:bold;color:#4b5563">Weekend - North route</div>
<div class="t" style="left:1139px;top:560px;font-size:10.400px;color:#5b6470">0 hr 44 min (11.21 Mi)</div>
<div class="t" style="left:1468px;top:560px;width:16px;font-size:10.500px;color:#5b6470;text-align:right">1 hr</div>
<svg style="left:1096px;top:585px" width="20" height="44"><circle cx="9" cy="9" r="8" fill="#c9e0f5"/><path d="M4.500 9L9 5l4.500 4M6 8.500v4.500h6V8.500" fill="none" stroke="#2f7fc4" stroke-width="1.100"/><path d="M8 18v8" stroke="#2f7fc4" stroke-width="1"/><circle cx="9" cy="34" r="8" fill="#c9e0f5"/><path d="M6 39v-9q3-1.500 6 0t3 0v5q-3 1-6 0t-3 0" fill="none" stroke="#2f7fc4" stroke-width="1.100"/></svg>
<div class="t" style="left:1119px;top:588px;font-size:10.750px;color:#5b6470">Brooklyn Methodist Hospital, 6th Street, Brooklyn, NY, USA</div>
<div class="t" style="left:1119px;top:612px;font-size:10.400px;color:#5b6470">Brooklyn, NY 11215, USA, Prospect Park</div>
<div style="left:1092px;top:638px;width:398px;height:32px;background:#f1f5f9;border-radius:0 0 6px 6px"></div>
<div style="left:1124px;top:642px;width:16px;height:16px;border-radius:50%;background:#e2e6ea"></div>
<div style="left:1097px;top:642px;width:16px;height:16px;border-radius:50%;background:#8a8f94"></div>
<svg style="left:1097px;top:642px" width="16" height="16"><path d="M5 14l1-5q2-5 4 0l1 5z" fill="#33383c"/><circle cx="8" cy="6" r="2.600" fill="#c9bfb8"/></svg>
<div style="left:1111px;top:642px;width:16px;height:16px;border-radius:50%;background:#fff;border:1px solid #eceff2"></div>
<div class="t" style="left:1127px;top:643px;font-size:10.500px;color:#5b6470">A</div>
<div class="t" style="left:1440px;top:643px;width:45px;font-size:11px;color:#6b7480;text-align:right">2 Jobs</div>

<div style="left:377px;top:699px;width:1152px;height:1px;background:#d3d6da"></div>
<div style="left:1376px;top:714px;width:68px;height:28px;background:#fff;border:1px solid #cfd3d8;border-radius:3px"></div>
<div class="t" style="left:1393px;top:720px;font-size:10.700px;color:#4b5563">Cancel</div>
<div style="left:1456px;top:714px;width:59px;height:28px;background:#e8501e;border-radius:3px"></div>
<div class="t" style="left:1473px;top:720px;font-size:10.700px;font-weight:bold;color:#fff">Save</div>
</body></html>
